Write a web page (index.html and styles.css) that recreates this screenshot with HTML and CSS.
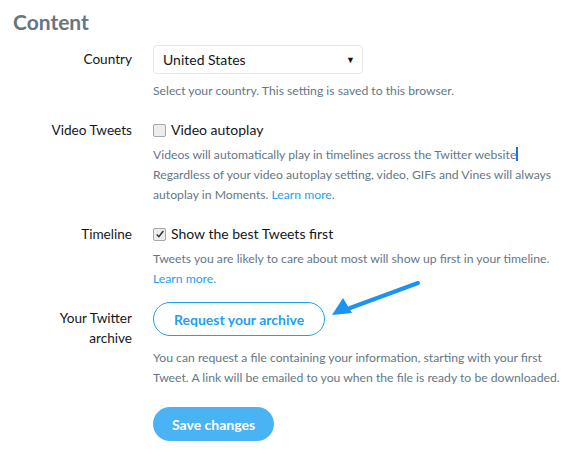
FILE: index.html
```html
<!DOCTYPE html>
<html>
<head>
<meta charset="utf-8">
<link rel="stylesheet" href="styles.css">
</head>
<body>
<div class="page">
  <h2 class="title">Content</h2>

  <div class="row row-country">
    <div class="label label-select">Country</div>
    <div class="control">
      <div class="select">
        <span>United States</span>
        <span class="caret">▼</span>
      </div>
      <p class="help help-select">Select your country. This setting is saved to this browser.</p>
    </div>
  </div>

  <div class="row">
    <div class="label">Video Tweets</div>
    <div class="control">
      <label class="check"><span class="box"></span>Video autoplay</label>
      <p class="help">Videos will automatically play in timelines across the Twitter website<span class="cursor"></span><br>Regardless of your video autoplay setting, video, GIFs and Vines will always autoplay in Moments. <a class="link">Learn more</a>.</p>
    </div>
  </div>

  <div class="row row-timeline">
    <div class="label">Timeline</div>
    <div class="control">
      <label class="check"><span class="box checked"><svg viewBox="0 0 12 12" width="10" height="10"><path d="M2 6.5 L4.7 9.2 L10 2.5" fill="none" stroke="#333" stroke-width="1.8"/></svg></span>Show the best Tweets first</label>
      <p class="help">Tweets you are likely to care about most will show up first in your timeline. <a class="link">Learn more</a>.</p>
    </div>
  </div>

  <div class="row">
    <div class="label label-btn">Your Twitter<br>archive</div>
    <div class="control">
      <button class="btn-outline">Request your archive</button>
      <p class="help help-btn">You can request a file containing your information, starting with your first Tweet. A link will be emailed to you when the file is ready to be downloaded.</p>
      <button class="btn-primary">Save changes</button>
    </div>
  </div>

  <svg class="arrow" width="100" height="45" viewBox="0 0 100 45">
    <line x1="88" y1="7" x2="20" y2="32" stroke="#1a94f0" stroke-width="4" stroke-linecap="round"/>
    <polygon points="2,39 13,22 22,37" fill="#1a94f0"/>
  </svg>
</div>
</body>
</html>
```

FILE: styles.css
```css
* { box-sizing: border-box; }
body {
  margin: 0;
  background: #fff;
  font-family: "Lato", "Open Sans", sans-serif;
  color: #14171a;
}
.page {
  position: relative;
  padding: 8px 13px 0 13px;
}
.title {
  margin: 0 0 9px 0;
  font-size: 21px;
  line-height: 28px;
  font-weight: 700;
  color: #66757f;
}
.row {
  display: flex;
  margin-bottom: 19px;
}
.row-country { margin-bottom: 19px; }
.row-timeline { margin-bottom: 13px; }
.label {
  width: 119px;
  flex: none;
  text-align: right;
  font-size: 13.6px;
  line-height: 20px;
  color: #14171a;
}
.label-select { padding-top: 4px; }
.label-btn { padding-top: 6px; }
.control {
  margin-left: 21px;
  width: 420px;
}
.select {
  width: 210px;
  height: 29px;
  border: 1px solid #e1e8ed;
  border-radius: 4px;
  display: flex;
  align-items: center;
  justify-content: space-between;
  padding: 0 7px 0 9px;
  font-size: 14px;
  color: #14171a;
}
.caret { font-size: 9px; }
.help {
  margin: 5px 0 0 0;
  font-size: 12.2px;
  line-height: 20px;
  color: #657786;
}
.help-select { margin-top: 7px; }
.help-btn { margin-top: 12px; }
.link { color: #1da1f2; }
.cursor {
  display: inline-block;
  width: 2px;
  height: 14px;
  background: #1a73e8;
  vertical-align: -2px;
}
.check {
  display: flex;
  align-items: center;
  font-size: 14px;
  line-height: 20px;
}
.box {
  width: 13px;
  height: 13px;
  border: 1px solid #a6a6a6;
  border-radius: 2px;
  background: #ededed;
  margin-right: 5px;
  display: flex;
  align-items: center;
  justify-content: center;
}
.btn-outline {
  display: block;
  height: 34px;
  padding: 0 20px;
  border: 1px solid #1da1f2;
  border-radius: 17px;
  background: #fff;
  color: #1da1f2;
  font-family: inherit;
  font-size: 14px;
  font-weight: 700;
}
.btn-primary {
  display: block;
  margin-top: 19px;
  height: 34px;
  padding: 0 19px;
  border: none;
  border-radius: 17px;
  background: #4ab3f4;
  color: #fff;
  font-family: inherit;
  font-size: 14px;
  font-weight: 700;
}
.arrow {
  position: absolute;
  left: 330px;
  top: 276px;
}
```
